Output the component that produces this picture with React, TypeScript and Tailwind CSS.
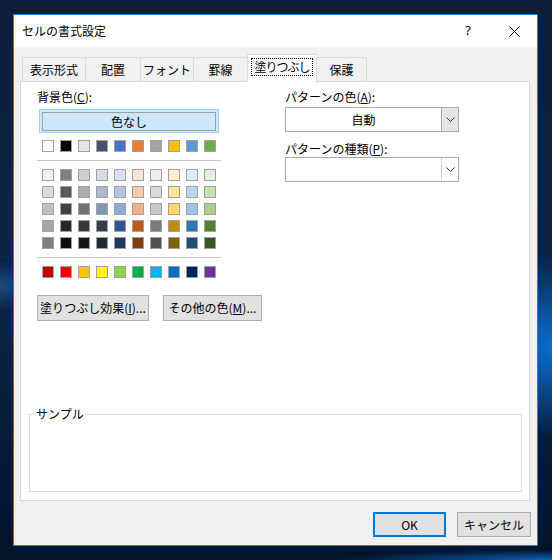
import React from 'react';

const themeTop = ['#FFFFFF', '#000000', '#E7E6E6', '#44546A', '#4472C4', '#ED7D31', '#A5A5A5', '#FFC000', '#5B9BD5', '#70AD47'];

const themeTints: string[][] = [
  ['#F2F2F2', '#808080', '#D0CECE', '#D6DCE4', '#D9E1F2', '#FCE4D6', '#EDEDED', '#FFF2CC', '#DDEBF7', '#E2EFDA'],
  ['#D9D9D9', '#595959', '#AEAAAA', '#ACB9CA', '#B4C6E7', '#F8CBAD', '#DBDBDB', '#FFE699', '#BDD7EE', '#C6E0B4'],
  ['#BFBFBF', '#404040', '#767171', '#8497B0', '#8EA9DB', '#F4B084', '#C9C9C9', '#FFD966', '#9BC2E6', '#A9D08E'],
  ['#A6A6A6', '#262626', '#3B3838', '#333F4F', '#305496', '#C65911', '#7B7B7B', '#BF8F00', '#2F75B5', '#548235'],
  ['#808080', '#0D0D0D', '#171616', '#222B35', '#203764', '#833C0C', '#525252', '#806000', '#1F4E78', '#375623'],
];

const standard = ['#C00000', '#FF0000', '#FFC000', '#FFFF00', '#92D050', '#00B050', '#00B0F0', '#0070C0', '#002060', '#7030A0'];

const tabs = [
  { label: '表示形式', w: 64 },
  { label: '配置', w: 56 },
  { label: 'フォント', w: 54 },
  { label: '罫線', w: 55 },
  { label: '塗りつぶし', w: 70, active: true },
  { label: '保護', w: 51 },
];

function SwatchRow({ colors }: { colors: string[] }) {
  return (
    <div className="flex gap-[6px] pl-[5px]">
      {colors.map((c, i) => (
        <div key={i} className="w-[12px] h-[12px] border border-[#a0a0a0]" style={{ backgroundColor: c }} />
      ))}
    </div>
  );
}

function Chevron() {
  return (
    <svg width="9" height="5" viewBox="0 0 9 5" fill="none">
      <path d="M0.5 0.5 L4.5 4.5 L8.5 0.5" stroke="#333" strokeWidth="1" />
    </svg>
  );
}

function Combo({ value, grayArrow }: { value?: string; grayArrow?: boolean }) {
  return (
    <div className="flex h-[25px] w-[174px] border border-[#ababab] bg-white">
      <div className="flex-1 flex items-center justify-center leading-[16px]">{value}</div>
      <div
        className={
          grayArrow
            ? 'w-[17px] flex items-center justify-center bg-[#e5e5e5] border-l border-[#ababab]'
            : 'w-[17px] flex items-center justify-center border-l border-[#d4d4d4]'
        }
      >
        <Chevron />
      </div>
    </div>
  );
}

function Button({ children, w }: { children: React.ReactNode; w: string }) {
  return (
    <div className={`${w} h-[26px] flex items-center justify-center bg-[#e1e1e1] border border-[#adadad] leading-[16px] whitespace-nowrap`}>
      {children}
    </div>
  );
}

export default function App() {
  return (
    <div className="w-[552px] h-[560px] overflow-hidden pt-[14px] pl-[13px] bg-[image:radial-gradient(70px_90px_at_100%_62%,#0a6fd3,transparent),radial-gradient(40px_24px_at_0%_51%,#1d4b7d,transparent),radial-gradient(220px_10px_at_100%_100%,#0b5fb8,transparent),linear-gradient(180deg,#0c1e3a_0%,#0b2446_55%,#041630_92%,#031327_100%)] font-['Noto_Sans_CJK_JP','Noto_Sans',sans-serif] text-[12px] text-black">
      <div className="w-[525px] h-[532px] border border-[#1883d7] bg-[#f0f0f0] flex flex-col">
        {/* title bar */}
        <div className="h-[32px] bg-white flex items-center">
          <div className="pl-[8px] flex-1 leading-[16px]">セルの書式設定</div>
          <div className="w-[46px] h-full flex items-center justify-center font-['Noto_Sans',sans-serif] text-[13px]">?</div>
          <div className="w-[46px] h-full flex items-center justify-center">
            <svg width="11" height="11" viewBox="0 0 11 11">
              <path d="M0.5 0.5 L10.5 10.5 M10.5 0.5 L0.5 10.5" stroke="#000" strokeWidth="1" />
            </svg>
          </div>
        </div>

        {/* tabs */}
        <div className="h-[34px] pt-[7px] pl-[8px] flex items-end">
          {tabs.map((t, i) =>
            t.active ? (
              <div
                key={t.label}
                className="relative z-10 -ml-px -mb-px h-[28px] bg-white border border-b-0 border-[#d9d9d9] flex justify-center pt-[3px] whitespace-nowrap"
                style={{ width: t.w }}
              >
                <div className="h-[18px] px-[2px] border border-dotted border-black flex items-center leading-[16px] tracking-[-1px]">{t.label}</div>
              </div>
            ) : (
              <div
                key={t.label}
                className={`h-[24px] bg-[#f0f0f0] border border-b-0 border-[#d9d9d9] flex items-center justify-center leading-[16px] pt-[1px] whitespace-nowrap ${i > 0 ? '-ml-px' : ''}`}
                style={{ width: t.w }}
              >
                {t.label}
              </div>
            )
          )}
        </div>

        {/* panel */}
        <div className="ml-[6px] w-[510px] h-[420px] bg-white border border-[#d9d9d9] flex flex-col">
          <div className="flex pt-[7px] pl-[16px]">
            {/* left column */}
            <div className="w-[184px] flex flex-col">
              <div className="leading-[16px]">
                背景色(<span className="underline">C</span>):
              </div>
              <div className="mt-[4px] ml-[2px] w-[180px] h-[24px] border border-[#99d1ff] bg-[#cce8ff] p-[2px] pb-[1px]">
                <div className="h-full border border-[#a0a0a0] flex items-center justify-center leading-[16px]">色なし</div>
              </div>
              <div className="mt-[7px]">
                <SwatchRow colors={themeTop} />
              </div>
              <div className="mt-[8px] h-px bg-[#c8c8c8]" />
              <div className="mt-[8px] flex flex-col gap-[5px]">
                {themeTints.map((r, i) => (
                  <SwatchRow key={i} colors={r} />
                ))}
              </div>
              <div className="mt-[8px] h-px bg-[#c8c8c8]" />
              <div className="mt-[8px]">
                <SwatchRow colors={standard} />
              </div>
              <div className="mt-[17px] flex gap-[14px]">
                <Button w="w-[112px] shrink-0">
                  塗りつぶし効果(<span className="underline">I</span>)...
                </Button>
                <Button w="w-[99px] shrink-0">
                  その他の色(<span className="underline">M</span>)...
                </Button>
              </div>
            </div>

            {/* right column */}
            <div className="ml-[64px] flex flex-col">
              <div className="leading-[16px]">
                パターンの色(<span className="underline">A</span>):
              </div>
              <div className="mt-[2px]">
                <Combo value="自動" grayArrow />
              </div>
              <div className="mt-[9px] leading-[16px]">
                パターンの種類(<span className="underline">P</span>):
              </div>
              <Combo />
            </div>
          </div>

          {/* sample */}
          <div className="mt-auto mb-[8px] ml-[8px] w-[493px] h-[78px] border border-[#dcdcdc] relative">
            <div className="absolute left-[5px] -top-[9px] bg-white px-[1px] leading-[16px]">サンプル</div>
          </div>
        </div>

        {/* footer buttons */}
        <div className="mt-[11px] flex justify-end gap-[11px] pr-[6px]">
          <div className="w-[73px] h-[25px] bg-[#e1e1e1] border-2 border-[#0078d7] flex items-center justify-center leading-[16px]">OK</div>
          <div className="w-[74px] h-[25px] bg-[#e1e1e1] border border-[#adadad] flex items-center justify-center leading-[16px]">キャンセル</div>
        </div>
      </div>
    </div>
  );
}
